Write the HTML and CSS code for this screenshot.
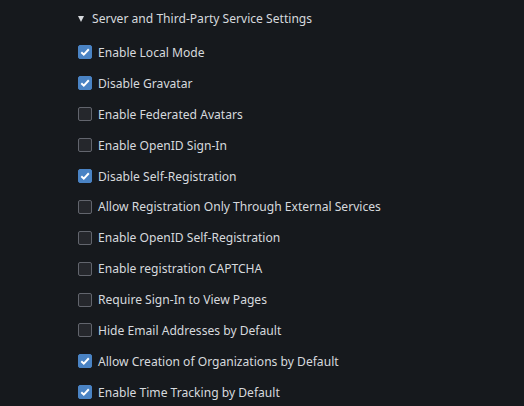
FILE: index.html
```html
<!DOCTYPE html>
<html lang="en">
<head>
    <meta charset="UTF-8">
    <title>Settings</title>
    <link rel="stylesheet" href="styles.css">
</head>
<body>
    <details class="section" open>
        <summary>Server and Third-Party Service Settings</summary>
        <label class="opt"><input type="checkbox" checked> Enable Local Mode</label>
        <label class="opt"><input type="checkbox" checked> Disable Gravatar</label>
        <label class="opt"><input type="checkbox"> Enable Federated Avatars</label>
        <label class="opt"><input type="checkbox"> Enable OpenID Sign-In</label>
        <label class="opt"><input type="checkbox" checked> Disable Self-Registration</label>
        <label class="opt"><input type="checkbox"> Allow Registration Only Through External Services</label>
        <label class="opt"><input type="checkbox"> Enable OpenID Self-Registration</label>
        <label class="opt"><input type="checkbox"> Enable registration CAPTCHA</label>
        <label class="opt"><input type="checkbox"> Require Sign-In to View Pages</label>
        <label class="opt"><input type="checkbox"> Hide Email Addresses by Default</label>
        <label class="opt"><input type="checkbox" checked> Allow Creation of Organizations by Default</label>
        <label class="opt"><input type="checkbox" checked> Enable Time Tracking by Default</label>
    </details>
</body>
</html>
```

FILE: styles.css
```css
body {
    margin: 0;
    background: #16191d;
    color: #d6d9dd;
    font-family: 'Noto Sans', sans-serif;
    font-size: 12.1px;
}
.section {
    padding: 9px 0 0 78px;
}
summary {
    list-style: none;
    height: 20px;
    line-height: 20px;
    margin-bottom: 8px;
    cursor: pointer;
}
summary::before {
    content: "";
    display: inline-block;
    border-left: 3.5px solid transparent;
    border-right: 3.5px solid transparent;
    border-top: 6px solid #d6d9dd;
    margin-right: 8px;
    vertical-align: 1px;
}
.opt {
    display: flex;
    align-items: center;
    height: 30.9px;
}
.opt input {
    appearance: none;
    width: 14px;
    height: 14px;
    margin: 0 6px 0 0;
    border: 1.5px solid #62656d;
    border-radius: 2px;
    background: #25272c;
}
.opt input:checked {
    background: #4a83c4 url("data:image/svg+xml,%3Csvg xmlns='http://www.w3.org/2000/svg' viewBox='0 0 14 14'%3E%3Cpath d='M3.3 7.2l2.5 2.4L10.8 4.3' fill='none' stroke='white' stroke-width='2'/%3E%3C/svg%3E") center/14px no-repeat;
    border-color: #4a83c4;
}
```
